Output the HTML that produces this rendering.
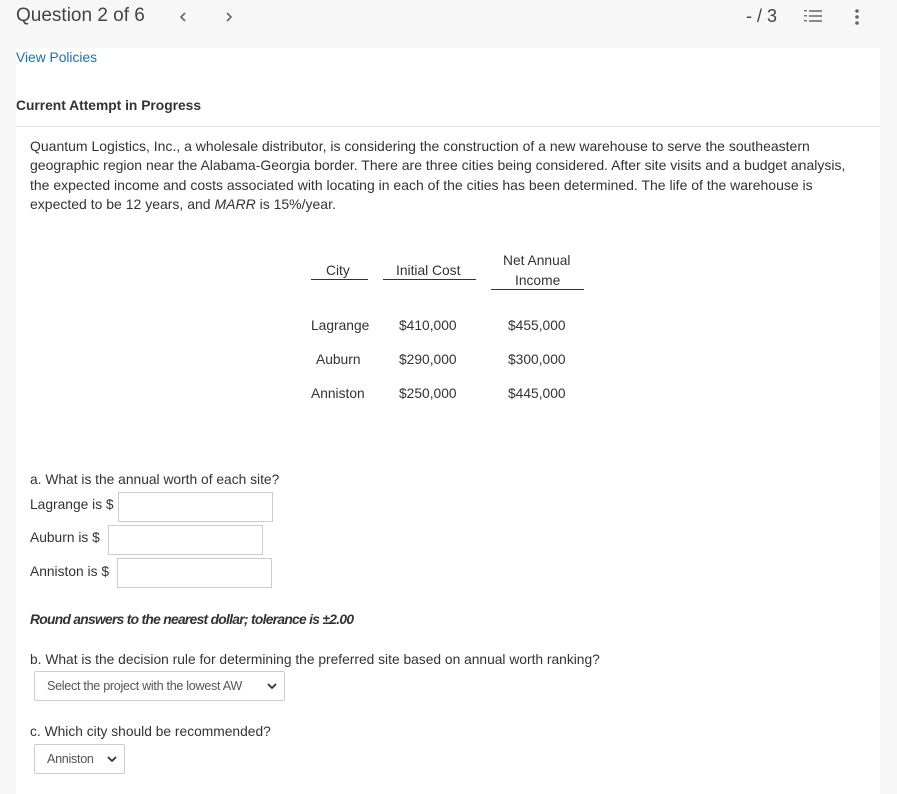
<!DOCTYPE html>
<html><head><meta charset="utf-8"><style>
*{margin:0;padding:0;box-sizing:border-box}
body{width:897px;height:794px;background:#f7f7f7;font-family:"Liberation Sans",sans-serif;color:#333;position:relative;overflow:hidden}
.a{position:absolute;white-space:nowrap}
.panel{position:absolute;left:16px;top:48px;width:864px;height:746px;background:#fff}
.t{font-size:13.8px}
.in{position:absolute;border:1px solid #ccc;background:#fff;height:30px}
.sel{position:absolute;border:1px solid #ccc;border-radius:2px;background:#fff;height:30px;font-size:12.6px;color:#555;padding:7px 0 0 12px;letter-spacing:-0.3px}
.chev{position:absolute;right:7px;top:10px;width:10px;height:8px}
.ul{position:absolute;border-bottom:1px solid #333;height:1px}
</style></head><body>
<div class="a" style="left:16px;top:5px;font-size:19px;color:#444">Question 2 of 6</div>
<svg class="a" style="left:178px;top:11px" width="10" height="12"><path d="M7 2 L3 6 L7 10" stroke="#666" stroke-width="1.6" fill="none"/></svg>
<svg class="a" style="left:224px;top:11px" width="10" height="12"><path d="M3 2 L7 6 L3 10" stroke="#666" stroke-width="1.6" fill="none"/></svg>
<div class="a" style="left:746px;top:6px;font-size:18px;color:#444">- / 3</div>
<svg class="a" style="left:804px;top:8px" width="20" height="16"><g fill="#777"><rect x="0" y="2" width="3" height="1.5"/><rect x="0" y="7" width="3" height="1.5"/><rect x="0" y="12" width="3" height="1.5"/></g><g stroke="#666" stroke-width="1.6"><path d="M5 3H18M5 8H18M5 13H18"/></g></svg>
<svg class="a" style="left:854px;top:8px" width="6" height="18"><g fill="#666"><circle cx="3" cy="3" r="1.8"/><circle cx="3" cy="9" r="1.8"/><circle cx="3" cy="15" r="1.8"/></g></svg>
<div class="panel"></div>
<div class="a t" style="left:16px;top:50px;color:#1a73a8">View Policies</div>
<div class="a" style="left:16px;top:98px;font-size:13.8px;font-weight:bold;color:#333">Current Attempt in Progress</div>
<div class="a" style="left:16px;top:126px;width:864px;border-top:1px solid #e5e5e5"></div>
<div class="a" style="left:30px;top:137px;line-height:19.3px;color:#333;font-size:14px">
Quantum Logistics, Inc., a wholesale distributor, is considering the construction of a new warehouse to serve the southeastern<br>
geographic region near the Alabama-Georgia border. There are three cities being considered. After site visits and a budget analysis,<br>
the expected income and costs associated with locating in each of the cities has been determined. The life of the warehouse is<br>
expected to be 12 years, and <i>MARR</i> is 15%/year.</div>
<div class="a t" style="left:326px;top:263px">City</div>
<div class="ul" style="left:311px;top:279px;width:57px"></div>
<div class="a t" style="left:396px;top:263px">Initial Cost</div>
<div class="ul" style="left:383px;top:279px;width:93px"></div>
<div class="a t" style="left:503px;top:253px">Net Annual</div>
<div class="a t" style="left:515px;top:273px">Income</div>
<div class="ul" style="left:491px;top:289px;width:93px"></div>
<div class="a t" style="left:311px;top:318px">Lagrange</div><div class="a t" style="left:399px;top:318px">$410,000</div><div class="a t" style="left:508px;top:318px">$455,000</div>
<div class="a t" style="left:316px;top:352px">Auburn</div><div class="a t" style="left:399px;top:352px">$290,000</div><div class="a t" style="left:508px;top:352px">$300,000</div>
<div class="a t" style="left:311px;top:386px">Anniston</div><div class="a t" style="left:399px;top:386px">$250,000</div><div class="a t" style="left:508px;top:386px">$445,000</div>
<div class="a t" style="left:30px;top:472px">a. What is the annual worth of each site?</div>
<div class="a t" style="left:30px;top:497px">Lagrange is $</div><div class="in" style="left:118px;top:492px;width:155px"></div>
<div class="a t" style="left:30px;top:530px">Auburn is $</div><div class="in" style="left:108px;top:525px;width:155px"></div>
<div class="a t" style="left:30px;top:564px">Anniston is $</div><div class="in" style="left:117px;top:558px;width:155px"></div>
<div class="a t" style="left:30px;top:612px;font-weight:bold;font-style:italic;letter-spacing:-0.7px">Round answers to the nearest dollar; tolerance is ±2.00</div>
<div class="a t" style="left:30px;top:652px">b. What is the decision rule for determining the preferred site based on annual worth ranking?</div>
<div class="sel" style="left:34px;top:671px;width:251px">Select the project with the lowest AW<svg class="chev" viewBox="0 0 10 8"><path d="M1 2L5 6L9 2" stroke="#333" stroke-width="1.8" fill="none"/></svg></div>
<div class="a t" style="left:30px;top:724px">c. Which city should be recommended?</div>
<div class="sel" style="left:34px;top:744px;width:91px">Anniston<svg class="chev" viewBox="0 0 10 8"><path d="M1 2L5 6L9 2" stroke="#333" stroke-width="1.8" fill="none"/></svg></div>
</body></html>
